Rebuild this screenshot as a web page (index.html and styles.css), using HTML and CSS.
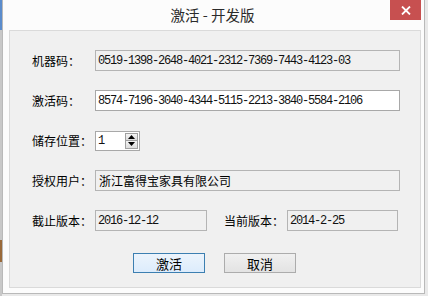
FILE: index.html
```html
<!DOCTYPE html>
<html lang="zh-CN">
<head>
<meta charset="utf-8">
<title>激活 - 开发版</title>
<link rel="stylesheet" href="styles.css">
</head>
<body>
<div class="desk">
  <div class="strip"></div>
  <div class="window">
    <div class="titlebar">
      <div class="title">激活 - 开发版</div>
      <div class="close">
        <svg width="10" height="9" viewBox="0 0 10 9"><path d="M1 0.5 L9 8.5 M9 0.5 L1 8.5" stroke="#fff" stroke-width="1.8"/></svg>
      </div>
    </div>
    <div class="client">
      <div class="row">
        <span class="label">机器码：</span>
        <div class="field ro wide mono">0519-1398-2648-4021-2312-7369-7443-4123-03</div>
      </div>
      <div class="row">
        <span class="label">激活码：</span>
        <div class="field wide mono">8574-7196-3040-4344-5115-2213-3840-5584-2106</div>
      </div>
      <div class="row">
        <span class="label">储存位置：</span>
        <div class="spin">
          <span class="spinval mono">1</span>
          <div class="spinbtns">
            <div class="sb"><svg width="7" height="4" viewBox="0 0 7 4"><path d="M3.5 0 L7 4 L0 4Z" fill="#000"/></svg></div>
            <div class="sb"><svg width="7" height="4" viewBox="0 0 7 4"><path d="M0 0 L7 0 L3.5 4Z" fill="#000"/></svg></div>
          </div>
        </div>
      </div>
      <div class="row">
        <span class="label">授权用户：</span>
        <div class="field ro wide cn">浙江富得宝家具有限公司</div>
      </div>
      <div class="row">
        <span class="label">截止版本：</span>
        <div class="field ro short mono">2016-12-12</div>
        <span class="label label2">当前版本：</span>
        <div class="field ro short2 mono">2014-2-25</div>
      </div>
      <div class="buttons">
        <div class="btn primary">激活</div>
        <div class="btn">取消</div>
      </div>
    </div>
  </div>
</div>
</body>
</html>
```
FILE: styles.css
```css
* { box-sizing: border-box; }
html, body { margin: 0; padding: 0; }
body {
  width: 428px;
  height: 296px;
  background: #e9e9e9;
  font-family: "Noto Sans CJK SC", "Microsoft YaHei", sans-serif;
  font-size: 12px;
  color: #000;
  overflow: hidden;
}
.desk { display: flex; height: 296px; }
.strip {
  width: 2px;
  background: linear-gradient(#5b8ccc 0 30px, #c8c8c8 30px 240px, #9a6a3a 240px 262px, #c8c8c8 262px);
}
.window {
  width: 423px;
  height: 294px;
  background: #fcfcfc;
  border: 1px solid #b9b9b9;
  border-top: none;
  display: flex;
  flex-direction: column;
}
.titlebar {
  height: 30px;
  flex: none;
  display: flex;
  align-items: center;
  justify-content: center;
  position: relative;
}
.title {
  font-size: 14.5px;
  color: #2b2b2b;
  margin-top: -1px;
  margin-left: -2px;
}
.close {
  position: absolute;
  left: 387px;
  top: 0;
  width: 31px;
  height: 20px;
  background: #c75050;
  display: flex;
  align-items: center;
  justify-content: center;
}
.client {
  margin-left: 6px;
  width: 412px;
  height: 258px;
  background: #f0f0f0;
  border: 1px solid #dadada;
  padding: 19px 0 0 22px;
  display: flex;
  flex-direction: column;
  gap: 19px;
}
.row {
  display: flex;
  align-items: center;
  height: 21px;
}
.label {
  width: 63px;
  flex: none;
  font-size: 12px;
  line-height: 21px;
}
.label2 { width: 63px; margin-left: 17px; }
.field {
  height: 21px;
  border: 1px solid #a8a8a8;
  padding: 0 0 0 2px;
  display: flex;
  align-items: center;
  background: #fff;
  white-space: nowrap;
  overflow: hidden;
}
.field.ro { background: #f0f0f0; border-color: #b4b4b4; }
.wide { width: 305px; }
.short { width: 112px; }
.short2 { width: 111px; }
.mono {
  font-family: "Liberation Mono", monospace;
  font-size: 12px;
  letter-spacing: -1.2px;
  color: #111;
}
.cn { font-size: 12px; padding-left: 3px; }
.spin {
  width: 45px;
  height: 20px;
  border: 1px solid #a8a8a8;
  background: #fff;
  display: flex;
  align-items: center;
  padding-left: 1px;
  padding-right: 1px;
}
.spinval { flex: 1; padding-left: 1px; }
.spinbtns {
  width: 13px;
  height: 16px;
  display: flex;
  flex-direction: column;
}
.sb {
  flex: 1;
  border: 1px solid #a0a0a0;
  background: linear-gradient(#f4f4f4, #dcdcdc);
  display: flex;
  align-items: center;
  justify-content: center;
}
.sb + .sb { border-top: none; }
.buttons {
  display: flex;
  gap: 19px;
  margin-top: 3px;
  padding-left: 101px;
}
.btn {
  width: 72px;
  height: 20px;
  border: 1px solid #acacac;
  background: linear-gradient(#f0f0f0, #e3e3e3);
  font-size: 13px;
  display: flex;
  align-items: center;
  justify-content: center;
}
.btn.primary { border-color: #3c7fb1; background: linear-gradient(#ecf4fc, #dcecfc); }
```
